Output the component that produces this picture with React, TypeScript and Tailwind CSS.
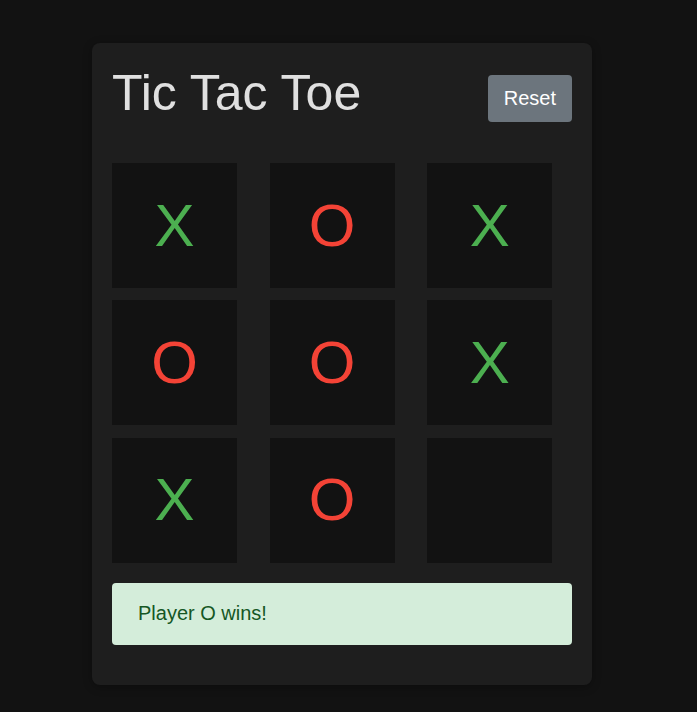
import { useState } from "react";

type Mark = "X" | "O" | null;

const initialBoard: Mark[] = ["X", "O", "X", "O", "O", "X", "X", "O", null];

const lines = [
  [0, 1, 2], [3, 4, 5], [6, 7, 8],
  [0, 3, 6], [1, 4, 7], [2, 5, 8],
  [0, 4, 8], [2, 4, 6],
];

function getWinner(board: Mark[]): Mark {
  for (const [a, b, c] of lines) {
    if (board[a] && board[a] === board[b] && board[a] === board[c]) return board[a];
  }
  return null;
}

export default function App() {
  const [board, setBoard] = useState<Mark[]>(initialBoard);
  const [next, setNext] = useState<"X" | "O">("X");

  const winner = getWinner(board);

  const play = (i: number) => {
    if (board[i] || winner) return;
    const copy = board.slice();
    copy[i] = next;
    setBoard(copy);
    setNext(next === "X" ? "O" : "X");
  };

  const reset = () => {
    setBoard(Array(9).fill(null));
    setNext("X");
  };

  return (
    <div
      className="min-h-screen bg-[#121212] pt-[43px] pl-[92px] pb-[27px]"
      style={{ fontFamily: '"Liberation Sans", Arial, sans-serif' }}
    >
      <div className="w-[500px] rounded-[8px] bg-[#1e1e1e] p-5 shadow-[0_2px_10px_rgba(0,0,0,0.3)]">
        {/* Header */}
        <div className="mb-[41px] flex items-start justify-between">
          <h1 className="mt-[5px] text-[50px] leading-none font-normal text-[#e0e0e0]">
            Tic Tac Toe
          </h1>
          <button
            onClick={reset}
            className="mt-[12px] rounded-[4px] bg-[#6c757d] px-4 py-3 text-[20px] leading-[23px] text-white"
          >
            Reset
          </button>
        </div>

        {/* Board */}
        <div className="grid grid-cols-3 gap-x-[12.8px] gap-y-[12.4px]">
          {board.map((cell, i) => (
            <button
              key={i}
              onClick={() => play(i)}
              className={`flex h-[125px] w-[125px] items-center justify-center bg-[#121212] text-[60px] leading-none ${
                cell === "X" ? "text-[#4caf50]" : "text-[#f44336]"
              }`}
            >
              {cell}
            </button>
          ))}
        </div>

        {/* Status */}
        <div className="mt-5 mb-5 flex h-[62px] items-center rounded-[4px] bg-[#d4edda] px-[26px] text-[20px] leading-[23px] text-[#155724]">
          {winner ? `Player ${winner} wins!` : board.every(Boolean) ? "It's a draw!" : `Next player: ${next}`}
        </div>
      </div>
    </div>
  );
}
